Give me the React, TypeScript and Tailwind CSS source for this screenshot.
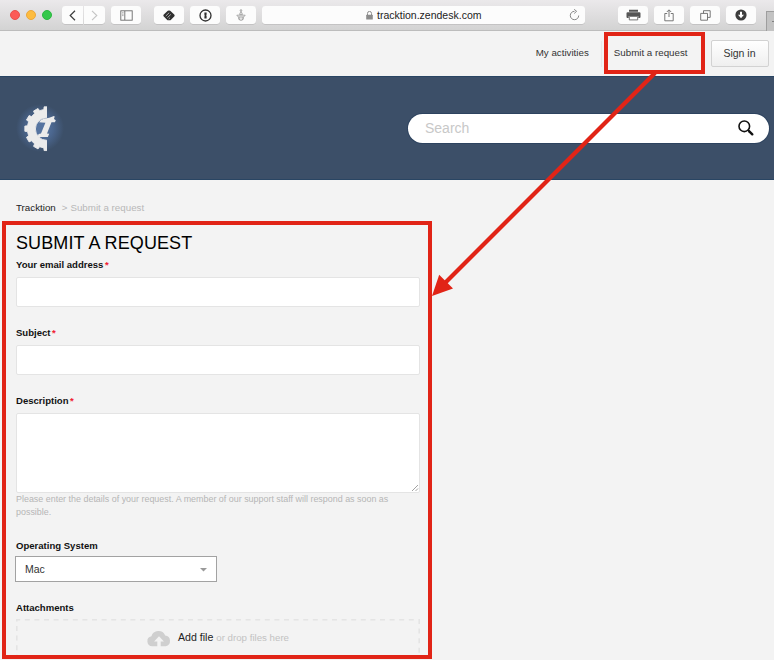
import React from "react";

const toolButton =
  "flex h-[18px] w-[30px] items-center justify-center rounded-[3px] bg-[#fcfcfc] shadow-[0_0.5px_0.5px_rgba(0,0,0,0.18)]";

function BrowserBar() {
  return (
    <header className="relative flex h-[31px] shrink-0 items-center border-b border-[#bcbcbc] bg-linear-to-b from-[#ebe9eb] to-[#d3d3d3] pl-[10px]">
      <div className="flex gap-[6px]">
        <span className="size-[10px] rounded-full border border-[#e9504b] bg-[#fc5b57]" />
        <span className="size-[10px] rounded-full border border-[#eda73a] bg-[#fdbc40]" />
        <span className="size-[10px] rounded-full border border-[#2bb840] bg-[#34c84a]" />
      </div>

      <div className="ml-[10px] flex h-[18px] gap-px">
        <span className="flex w-[21px] items-center justify-center rounded-l-[3px] bg-[#fcfcfc] shadow-[0_0.5px_0.5px_rgba(0,0,0,0.18)]">
          <svg width="7" height="11" viewBox="0 0 7 11" fill="none" stroke="#3c3c3c" strokeWidth="1.2">
            <path d="M6 0.8 1.2 5.5 6 10.2" />
          </svg>
        </span>
        <span className="flex w-[21px] items-center justify-center rounded-r-[3px] bg-[#fcfcfc] shadow-[0_0.5px_0.5px_rgba(0,0,0,0.18)]">
          <svg width="7" height="11" viewBox="0 0 7 11" fill="none" stroke="#c4c4c4" strokeWidth="1.1">
            <path d="M1 0.8 5.8 5.5 1 10.2" />
          </svg>
        </span>
      </div>

      <span className={`${toolButton} ml-[6px]`}>
        <svg width="13" height="11" viewBox="0 0 13 11" fill="none" stroke="#6a6a6a" strokeWidth="0.9">
          <rect x="0.8" y="0.8" width="11.4" height="9.4" />
          <path d="M4.8 1v9" />
          <path d="M2 2.7h1.6M2 4.2h1.6M2 5.6h1.6" strokeWidth="0.5" />
        </svg>
      </span>

      <span className={`${toolButton} ml-[13px]`}>
        <svg width="12" height="11" viewBox="0 0 12 11">
          <path d="M4.8.8Q6 0 7.2.8l4 3.7q.9 1 0 2L8 9.7q-.5.6-1.2.6H5.2q-.7 0-1.2-.6L.8 6.5q-.9-1 0-2z" fill="#303030" />
          <path d="m2.8 6 3.4-3.3M4.4 7.7l3.4-3.3M5.7 9l1.2-1.1" stroke="#e4e4e4" strokeWidth="0.7" fill="none" />
        </svg>
      </span>
      <span className={`${toolButton} ml-[6px]`}>
        <svg width="13" height="13" viewBox="0 0 13 13">
          <circle cx="6.5" cy="6.5" r="5.5" fill="none" stroke="#303030" strokeWidth="1.3" />
          <path d="M5.4 3.6h2.2v2l-.4.7.4.6v2.5H5.4V7.4l.4-.6-.4-.6z" fill="#303030" />
        </svg>
      </span>
      <span className={`${toolButton} ml-[6px]`}>
        <svg width="10" height="12" viewBox="0 0 10 12" fill="none" stroke="#8c8c8c" strokeWidth="0.7">
          <circle cx="5" cy="1.4" r="0.8" />
          <path d="M5 2.3 3.5 5.4h3zM.8 6.2h8.4L7.8 7.9H2.2zM2.4 8.2l.4 2.2L5 11.5l2.2-1.1.4-2.2M3.8 8v3M6.2 8v3" />
        </svg>
      </span>

      <div className="ml-[6px] flex h-[18px] w-[323px] items-center rounded-[3px] bg-[#fcfcfc] pr-[5px] shadow-[0_0.5px_0.5px_rgba(0,0,0,0.18)]">
        <svg className="ml-[104px]" width="7" height="9" viewBox="0 0 7 9">
          <rect x="0.2" y="3.8" width="6.6" height="4.8" rx="0.5" fill="#8c8c8c" />
          <path d="M1.5 4V2.4a2 2 0 0 1 4 0V4" fill="none" stroke="#8c8c8c" />
        </svg>
        <span className="ml-[4px] text-[10.5px] leading-[18px] text-[#222]">tracktion.zendesk.com</span>
        <svg className="ml-auto" width="11" height="12" viewBox="0 0 11 12" fill="none" stroke="#7a7a7a" strokeWidth="0.9">
          <path d="M5.5 2.3a4.2 4.2 0 1 0 4.2 4.2M5.2.3l2.4 2-2.4 2.2" />
        </svg>
      </div>

      <span className={`${toolButton} ml-[33px]`}>
        <svg width="15" height="12" viewBox="0 0 15 12">
          <path d="M3 .8h9v2H3zM1.6 3.2h11.8q1.1 0 1.1 1.1v3.8q0 1-1 1h-1.2V7H2.7v2.1H1.5q-1 0-1-1V4.3q0-1.1 1.1-1.1z" fill="#555" />
          <path d="M3.3 7.4h8.4v3.5H3.3z" fill="#fff" stroke="#666" strokeWidth="0.9" />
        </svg>
      </span>
      <span className={`${toolButton} ml-[6px]`}>
        <svg width="10" height="13" viewBox="0 0 10 13" fill="none" stroke="#6a6a6a" strokeWidth="0.9">
          <path d="M3.2 4.5H.8v7.3h8.4V4.5H6.8M5 8V1M2.8 3 5 .8 7.2 3" />
        </svg>
      </span>
      <span className={`${toolButton} ml-[6px]`}>
        <svg width="11" height="11" viewBox="0 0 11 11" fill="none" stroke="#6a6a6a" strokeWidth="0.9">
          <path d="M3.5 3.4V.7h6.7v6.7H7.5M.7 3.4h6.8v6.8H.7z" />
        </svg>
      </span>
      <span className={`${toolButton} ml-[6px]`}>
        <svg width="12" height="12" viewBox="0 0 12 12">
          <circle cx="6" cy="6" r="5.6" fill="#3d3d3d" />
          <path d="M5 2.7h2v3.1h2L6 9.2 3 5.8h2z" fill="#fff" />
        </svg>
      </span>
      <span className="mt-[11px] ml-[10px] flex h-[20px] w-[8px] shrink-0 items-center justify-end border-t border-l border-[#9e9e9e] bg-[#c3c3c3]">
        <span className="h-px w-[2px] bg-[#808080]" />
      </span>
    </header>
  );
}

// Twelve-tooth gear centred on (32.7, 26.7), drawn one tooth per 30 degrees.
const gearPoints = Array.from({ length: 12 }, (_, i) =>
  [
    [-8.5, 19.4],
    [-6.8, 22],
    [6.8, 22],
    [8.5, 19.4],
  ].map(([offset, radius]) => {
    const angle = ((i * 30 + offset) * Math.PI) / 180;
    return `${(32.7 + radius * Math.cos(angle)).toFixed(2)},${(26.7 + radius * Math.sin(angle)).toFixed(2)}`;
  }),
)
  .flat()
  .join(" L");

function Logo() {
  return (
    <div className="flex size-[52px] items-center justify-center bg-[radial-gradient(closest-side,#5674a0_20%,#4b668e_50%,#3c4f68_92%)]">
      <svg width="52" height="52" viewBox="0 0 52 52">
        <clipPath id="leftHalf">
          <rect width="32.9" height="52" />
        </clipPath>
        <path
          clipPath="url(#leftHalf)"
          fillRule="evenodd"
          d={`M${gearPoints}Z M32.7 15.7a11.3 11.3 0 1 0 0 22.6 11.3 11.3 0 1 0 0-22.6z`}
          fill="#ebebeb"
          stroke="#ebebeb"
          strokeWidth="0.9"
          strokeLinejoin="round"
        />
        <path
          d="M25 20.2q1.8-2.9 5-3.4 5.6-.8 9.9-2.8l.8.4-.7 2.7 1.8 1.2-.9 2h-3.4L33 31.4l2.2.4-1.3 3.2H23.4l1.2-3.1 2.4-.4 4.4-10.8q-4-.5-6.4-.5z"
          fill="#ebebeb"
        />
      </svg>
    </div>
  );
}

function Label({ children, required = false }: { children: string; required?: boolean }) {
  return (
    <div className="flex h-[14px] items-center text-[9.55px] leading-[14px] font-bold text-[#111]">
      {children}
      {required && <span className="ml-[1.5px] text-[#f02030]">*</span>}
    </div>
  );
}

function RequestForm() {
  return (
    <form className="flex w-[404px] flex-col">
      <h1 className="mt-[16px] h-[24px] text-[18px] leading-[24px] tracking-[0.1px] whitespace-nowrap text-black">
        SUBMIT A REQUEST
      </h1>
      <div className="mt-[3px]">
        <Label required>Your email address</Label>
        <div className="mt-[5px] h-[30px] rounded-[2px] border border-[#e4e4e4] bg-white" />
      </div>
      <div className="mt-[19px]">
        <Label required>Subject</Label>
        <div className="mt-[5px] h-[30px] rounded-[2px] border border-[#e4e4e4] bg-white" />
      </div>
      <div className="mt-[19px]">
        <Label required>Description</Label>
        <div className="mt-[5px] flex h-[80px] items-end justify-end rounded-[2px] border border-[#e4e4e4] bg-white">
          <svg width="8" height="8" viewBox="0 0 8 8" stroke="#8a8a8a" strokeWidth="0.8">
            <path d="M1 7 7 1M4.5 7 7 4.5" />
          </svg>
        </div>
        <p className="text-[8.93px] leading-[13px] whitespace-nowrap text-[#b6b6b6]">
          Please enter the details of your request. A member of our support staff will respond as soon as
          <br />
          possible.
        </p>
      </div>
      <div className="mt-[20px]">
        <Label>Operating System</Label>
        <div className="mt-[3px] -ml-px flex h-[26px] w-[202px] items-center justify-between border border-[#a2a2a2] bg-white pt-px pr-[9px] pl-[9px] text-[10.5px] text-[#333]">
          Mac
          <svg width="7" height="4" viewBox="0 0 7 4">
            <path d="M0 0h7L3.5 3.6z" fill="#999" />
          </svg>
        </div>
      </div>
      <div className="mt-[19px]">
        <Label>Attachments</Label>
        <div className="mt-[4px] flex h-[60px] items-start justify-center">
          <svg className="absolute" width="404" height="60" fill="none" stroke="#e4e4e4" strokeWidth="1.6" strokeDasharray="5 4.6">
            <path d="M.8 60V.8h402.4V60" />
          </svg>
          <div className="mt-[10px] flex h-[18px] items-center">
            <svg width="24" height="17" viewBox="0 0 24 17">
              <path
                fillRule="evenodd"
                d="M5.3 16.2A5 5 0 0 1 4.4 6.3 7.4 7.4 0 0 1 18.2 5.4a5.5 5.5 0 0 1 .6 10.8h-5.1V11.6h3.2L12 6.2 7.1 11.6h3.2v4.6z"
                fill="#cfcfcf"
              />
            </svg>
            <span className="ml-[7px] text-[10.6px] text-[#222]">Add file</span>
            <span className="ml-[3px] text-[9.7px] text-[#c2c2c2]">or drop files here</span>
          </div>
        </div>
      </div>
    </form>
  );
}

export default function App() {
  return (
    <div className="relative flex h-[660px] w-[774px] flex-col overflow-hidden bg-[#f3f3f3] font-['Liberation_Sans',Arial,sans-serif]">
      <BrowserBar />

      <nav className="flex h-[45px] shrink-0 items-center justify-end pr-[5px] text-[9.75px] text-[#333]">
        <span>My activities</span>
        <span className="ml-[12px] h-[26px] w-px bg-[#e8e8e8]" />
        <span className="ml-[12px]">Submit a request</span>
        <span className="ml-[23.5px] flex h-[27px] w-[58px] items-center justify-center rounded-[2px] border border-[#d2d2d2] bg-linear-to-b from-white to-[#efefef] pr-px text-[10.5px]">
          Sign in
        </span>
      </nav>

      <section className="flex h-[104px] shrink-0 items-center justify-between border-y border-[#294563] bg-[#3c4f68] pr-[5px] pl-[14px]">
        <Logo />
        <div className="flex h-[29px] w-[361px] items-center justify-between rounded-full bg-white pr-[15px] pl-[17px] text-[14px] text-[#c8c8c8] shadow-[0_0_0_1px_#2d435f]">
          Search
          <svg width="16" height="16" viewBox="0 0 16 16" fill="none" stroke="#111">
            <circle cx="6.3" cy="6.3" r="5.3" strokeWidth="1.6" />
            <path d="m10 10 1.5 1.5" strokeWidth="1.6" />
            <path d="m11.3 11.3 3 3" strokeWidth="2.4" strokeLinecap="round" />
          </svg>
        </div>
      </section>

      <main className="flex flex-col pl-[16px]">
        <div className="mt-[21px] flex h-[14px] items-center text-[9.75px] leading-[14px]">
          <span className="text-[#222]">Tracktion</span>
          <span className="ml-[6px] text-[#b8b8b8]">&gt;</span>
          <span className="ml-[3px] text-[#b8b8b8]">Submit a request</span>
        </div>
        <RequestForm />
      </main>

      <div className="absolute top-[32px] left-[604px] h-[42px] w-[101px] border-4 border-[#e12416]" />
      <div className="absolute top-[655px] left-[2px] h-[5px] w-[430px] bg-[#f3f3f3]" />
      <div className="absolute top-[221px] left-[2px] h-[438px] w-[430px] border-4 border-[#e12416]" />
      <svg className="absolute top-0 left-0" width="774" height="660" viewBox="0 0 774 660">
        <path d="M655 73 444 284" stroke="#e12416" strokeWidth="4.2" />
        <path d="M432 296 439.2 274.8 453 288.6z" fill="#e12416" />
      </svg>
    </div>
  );
}
